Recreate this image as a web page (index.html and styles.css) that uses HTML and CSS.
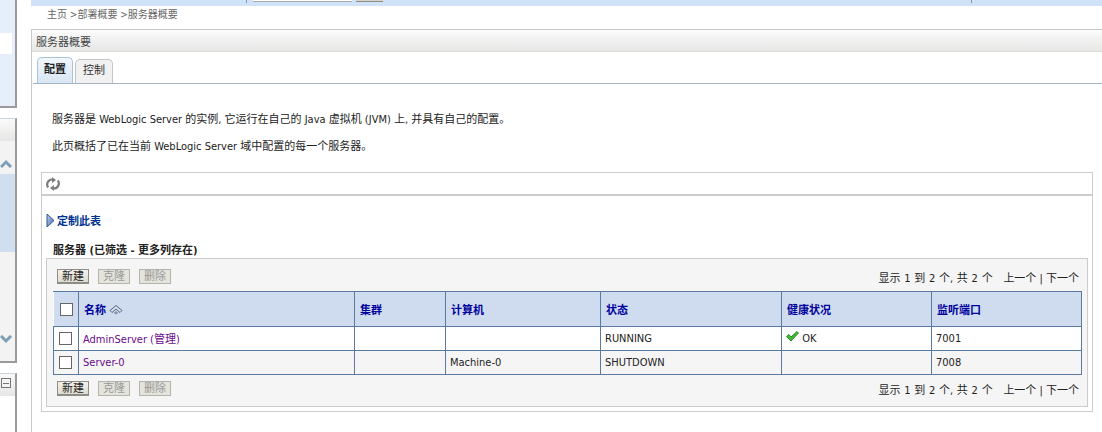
FILE: index.html
```html
<!DOCTYPE html>
<html lang="zh-CN">
<head>
  <meta charset="UTF-8" />
  <title>服务器概要</title>
  <link rel="stylesheet" href="styles.css">
</head>
<body>
  <div class="sidebar">
    <div class="side-panel panel-top">
      <div class="white-band"></div>
    </div>
    <div class="side-panel panel-tree">
      <div class="side-head"></div>
      <div class="chevron-row">
        <svg width="14" height="9" viewBox="0 0 14 9"><path d="M1 8 L6 3 L11 8" fill="none" stroke="#7f9fb8" stroke-width="3"/></svg>
      </div>
      <div class="tree-blue"></div>
      <div class="chevron-row chevron-down">
        <svg width="14" height="9" viewBox="0 0 14 9"><path d="M1 1 L6 6 L11 1" fill="none" stroke="#7f9fb8" stroke-width="3"/></svg>
      </div>
    </div>
    <div class="side-panel panel-bottom">
      <div class="side-head small-head"><span class="minus-box"></span></div>
    </div>
  </div>

  <div class="main">
    <div class="top-bar">
      <span class="top-sep"></span>
      <span class="top-input"></span>
      <span class="top-btn"></span>
      <span class="top-sep top-sep-right"></span>
    </div>
    <div class="crumbs">主页 &gt;部署概要 &gt;服务器概要</div>

    <div class="content">
      <div class="page-head">服务器概要</div>

      <div class="tabs">
        <div class="tab active">配置</div>
        <div class="tab">控制</div>
      </div>

      <div class="intro">
        <p>服务器是 WebLogic Server 的实例, 它运行在自己的 Java 虚拟机 (JVM) 上, 并具有自己的配置。</p>
        <p>此页概括了已在当前 WebLogic Server 域中配置的每一个服务器。</p>
      </div>

      <div class="table-box">
        <div class="refresh-bar">
          <svg width="14" height="14" viewBox="0 0 14 14">
            <path d="M2.2 10.5 A5 5 0 0 1 6.5 2.5" fill="none" stroke="#7d7d7d" stroke-width="2.2"/>
            <path d="M6 0 L10 3 L6 6 Z" fill="#7d7d7d"/>
            <path d="M11.8 3.5 A5 5 0 0 1 7.5 11.5" fill="none" stroke="#7d7d7d" stroke-width="2.2"/>
            <path d="M8 8 L4 11 L8 14 Z" fill="#7d7d7d"/>
          </svg>
        </div>
        <div class="customize">
          <svg width="9" height="15" viewBox="0 0 9 15">
            <defs><linearGradient id="tri" x1="0" y1="0" x2="1" y2="1"><stop offset="0" stop-color="#c6d6ee"/><stop offset="1" stop-color="#3f66a8"/></linearGradient></defs>
            <path d="M1 1 L8 7.5 L1 14 Z" fill="url(#tri)" stroke="#2f5596"/>
          </svg>
          <a>定制此表</a>
        </div>
        <div class="table-title">服务器 (已筛选 - 更多列存在)</div>
        <div class="table-panel">
          <div class="controls">
            <div class="buttons">
              <span class="btn">新建</span>
              <span class="btn off">克隆</span>
              <span class="btn off">删除</span>
            </div>
            <div class="pager">显示 1 到 2 个, 共 2 个 <span class="pager-links">上一个 | 下一个</span></div>
          </div>
          <table>
            <colgroup>
              <col class="c-check"><col class="c-name"><col class="c-cluster"><col class="c-machine"><col class="c-state"><col class="c-health"><col>
            </colgroup>
            <thead>
              <tr>
                <th class="check-cell"><span class="check big"></span></th>
                <th>名称
                  <svg class="sort" width="14" height="10" viewBox="0 0 14 10">
                    <path d="M1 5.5 L7 0.5 L13 5.5 L11 7.5 L7 4 L3 7.5 Z" fill="#d5deeb" stroke="#4f6685"/>
                    <path d="M4.5 8 L7 6 L9.5 8 L7 9.5 Z" fill="#8398b4"/>
                  </svg>
                </th>
                <th>集群</th>
                <th>计算机</th>
                <th>状态</th>
                <th>健康状况</th>
                <th>监听端口</th>
              </tr>
            </thead>
            <tbody>
              <tr>
                <td class="check-cell"><span class="check"></span></td>
                <td><a>AdminServer (管理)</a></td>
                <td></td>
                <td></td>
                <td>RUNNING</td>
                <td>
                  <svg class="ok" width="13" height="11" viewBox="0 0 13 11"><path d="M0.5 5.5 L3 3.5 L5 6 L11 0.5 L12.5 2 L5 10 Z" fill="#3fc02f" stroke="#1f6f1f" stroke-width="0.8"/></svg>
                  OK
                </td>
                <td>7001</td>
              </tr>
              <tr class="alt">
                <td class="check-cell"><span class="check"></span></td>
                <td><a>Server-0</a></td>
                <td></td>
                <td>Machine-0</td>
                <td>SHUTDOWN</td>
                <td></td>
                <td>7008</td>
              </tr>
            </tbody>
          </table>
          <div class="controls controls-bottom">
            <div class="buttons">
              <span class="btn">新建</span>
              <span class="btn off">克隆</span>
              <span class="btn off">删除</span>
            </div>
            <div class="pager">显示 1 到 2 个, 共 2 个 <span class="pager-links">上一个 | 下一个</span></div>
          </div>
        </div>
      </div>
    </div>
  </div>
</body>
</html>
```
FILE: styles.css
```css
* {
  box-sizing: border-box;
}

html, body {
  margin: 0;
  padding: 0;
  height: 432px;
  overflow: hidden;
}

body {
  display: flex;
  background: #fff;
  color: #222;
  font-family: "DejaVu Sans Condensed", "Noto Sans CJK SC", "Noto Sans", sans-serif;
  font-size: 11px;
}

/* left column */
.sidebar {
  width: 31px;
  flex: none;
  overflow: hidden;
}

.side-panel {
  width: 17px;
  background: #eef0f2;
  border: 1px solid #c9d3d9;
  border-left: none;
  border-right: 2px solid #9a9a9a;
  border-bottom: 2px solid #9a9a9a;
}

.panel-top {
  height: 108px;
  padding-top: 33px;
  border-top: none;
  background: #e6eefa;
}

.white-band {
  width: 12px;
  height: 21px;
  background: #fff;
}

.panel-tree {
  height: 245px;
  margin-top: 10px;
  background: #f3f3f3;
}

.side-head {
  height: 22px;
  background: linear-gradient(#fafafa, #e6e7e5);
}

.chevron-row {
  height: 33px;
  padding-top: 18px;
  line-height: 0;
}

.chevron-row svg {
  display: block;
}

.tree-blue {
  height: 78px;
  background: #cfdff0;
}

.chevron-down {
  padding-top: 83px;
  height: 100px;
}

.panel-bottom {
  height: 80px;
  margin-top: 10px;
  background: #fff;
  border-bottom: none;
}

.small-head {
  padding: 4px 0 0 1px;
}

.minus-box {
  display: block;
  width: 10px;
  height: 10px;
  border: 1px solid #777;
  background: linear-gradient(#777, #777) center / 6px 1px no-repeat #f4f4f4;
}

/* main column */
.main {
  flex: 1;
  min-width: 0;
  display: flex;
  flex-direction: column;
}

.top-bar {
  display: flex;
  align-items: flex-start;
  height: 6px;
  padding-left: 215px;
  background: #d0e2f8;
}

.top-sep {
  width: 1px;
  height: 3px;
  background: #8a97a8;
}

.top-sep-right {
  margin-left: 588px;
}

.top-input {
  width: 99px;
  height: 2px;
  margin-left: 6px;
  background: #fff;
  border-bottom: 1px solid #aaa;
}

.top-btn {
  width: 27px;
  height: 2px;
  margin-left: 4px;
  background: #d8d6cc;
  border-bottom: 1px solid #8c8c84;
}

.crumbs {
  height: 23px;
  padding: 1px 0 0 16px;
  line-height: 16px;
  font-size: 10px;
  color: #666;
}

.content {
  flex: 1;
  border-left: 1px solid #c8c8c8;
}

.page-head {
  height: 23px;
  padding-left: 4px;
  line-height: 25px;
  color: #444;
  border-top: 1px solid #c4c4c4;
  border-bottom: 1px solid #dcdcd8;
  background: linear-gradient(#fdfdfd, #f2f2f2 40%, #e7e8e6);
}

.tabs {
  display: flex;
  align-items: flex-end;
  gap: 2px;
  height: 32px;
  padding-left: 4px;
  margin-left: 1px;
  border-bottom: 1px solid #a3b6c8;
}

.tab {
  width: 38px;
  height: 24px;
  text-align: center;
  line-height: 22px;
  color: #333;
  background: #f1f1f1;
  border: 1px solid #c4c4c4;
  border-bottom: none;
  border-radius: 5px 5px 0 0;
}

.tab.active {
  width: 36px;
  height: 26px;
  line-height: 24px;
  font-weight: bold;
  color: #222;
  background: linear-gradient(#f0f6fc, #d8e6f3);
  border-color: #a8c4dc;
}

.intro {
  height: 88px;
  padding: 28px 0 0 20px;
}

.intro p {
  margin: 0 0 11px;
  line-height: 16px;
  color: #222;
}

.table-box {
  margin: 0 9px 0 9px;
  height: 240px;
  border: 1px solid #ccc;
}

.refresh-bar {
  height: 23px;
  padding: 4px 0 0 4px;
  border-bottom: 2px solid #ccc;
}

.refresh-bar svg {
  display: block;
}

.customize {
  display: flex;
  align-items: center;
  gap: 2px;
  height: 18px;
  margin-top: 15px;
  padding-left: 4px;
}

.customize a {
  color: #00338f;
  font-weight: bold;
}

.table-title {
  height: 14px;
  margin-top: 15px;
  padding-left: 11px;
  line-height: 14px;
  font-weight: bold;
  color: #222;
}

.table-panel {
  margin: 0 4px;
  height: 149px;
  padding: 0 6px;
  background: #f5f5f5;
  border: 1px solid #ccc;
}

.controls {
  display: flex;
  justify-content: space-between;
  align-items: center;
  height: 32px;
  padding: 3px 0 0 4px;
}

.controls-bottom {
  height: 27px;
  padding-top: 0;
}

.buttons {
  display: flex;
  gap: 9px;
}

.btn {
  width: 32px;
  height: 15px;
  line-height: 13px;
  text-align: center;
  color: #222;
  background: linear-gradient(#f4f2ea, #dedbd0);
  border: 1px solid #8d8d85;
  border-bottom-width: 2px;
}

.btn.off {
  color: #999;
  background: #e4e3dc;
  border: 1px solid #b4b4ac;
}

.pager {
  padding-right: 2px;
  color: #222;
  word-spacing: 0.6px;
}

.pager-links {
  margin-left: 7px;
  word-spacing: 0;
}

table {
  width: 1029px;
  border-collapse: collapse;
  table-layout: fixed;
  border: 1px solid #5a7a9f;
}

.c-check { width: 25px; }
.c-name { width: 276px; }
.c-cluster { width: 91px; }
.c-machine { width: 155px; }
.c-state { width: 181px; }
.c-health { width: 150px; }

th, td {
  padding: 0 0 1px 4px;
  border: 1px solid #5a7a9f;
  text-align: left;
  white-space: nowrap;
}

th {
  height: 35px;
  color: #00009c;
  font-weight: bold;
  background: #cfdcef;
  border-left-color: #fff;
  padding-left: 5px;
}

td {
  height: 24px;
  background: #fff;
}

tr.alt td {
  background: #f5f5f5;
}

td a {
  color: #6b0a8a;
}

.check-cell {
  padding: 0 0 0 5px;
  line-height: 0;
}

th.check-cell {
  padding-left: 6px;
}

.check {
  display: inline-block;
  width: 13px;
  height: 13px;
  background: #fff;
  border: 1px solid #666;
}

.sort {
  vertical-align: -1px;
}

.ok {
  vertical-align: 0;
}
```
